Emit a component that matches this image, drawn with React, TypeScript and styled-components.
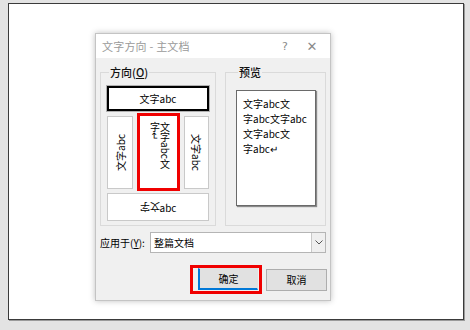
import React from "react";
import styled, { createGlobalStyle } from "styled-components";

const Global = createGlobalStyle`
  html, body { margin: 0; padding: 0; }
  body {
    background: #e3e3e3;
    font-family: "Noto Sans CJK SC", "Noto Sans", sans-serif;
    width: 470px;
    height: 330px;
    overflow: hidden;
  }
`;

const Page = styled.div`
  margin: 3px 0 0 8px;
  width: 456px;
  height: 317px;
  background: #fff;
  border: 1px solid #3a3a3a;
  box-shadow: 1px 1px 0 #9a9a9a;
  display: flex;
  align-items: flex-start;
  padding: 29px 0 0 86px;
  box-sizing: border-box;
`;

const Dialog = styled.div`
  width: 236px;
  height: 268px;
  border: 1px solid #c4c4c4;
  box-shadow: 0 0 6px rgba(0, 0, 0, 0.25);
  background: #f0f0f0;
  display: flex;
  flex-direction: column;
  box-sizing: border-box;
  font-size: 11px;
  color: #000;
`;

const TitleBar = styled.div`
  height: 24px;
  background: #fff;
  display: flex;
  align-items: center;
  padding: 0 0 0 6px;
  color: #9a9a9a;
  font-size: 11px;
`;

const Title = styled.span`
  flex: 1;
  letter-spacing: 0.2px;
`;

const TitleBtn = styled.span<{ $w: number }>`
  width: ${(p) => p.$w}px;
  text-align: center;
  color: #8a8a8a;
  font-family: "DejaVu Sans", sans-serif;
  font-size: ${(p) => (p.$w > 30 ? 13 : 11)}px;
`;

const Body = styled.div`
  flex: 1;
  display: flex;
  flex-direction: column;
  padding: 8px 3px 0 4px;
`;

const Groups = styled.div`
  display: flex;
  gap: 9px;
  align-items: stretch;
`;

const Group = styled.fieldset<{ $w: number; $pad: string }>`
  margin: 0;
  width: ${(p) => p.$w}px;
  box-sizing: border-box;
  border: 1px solid #dadada;
  padding: ${(p) => p.$pad};
  min-width: 0;
`;

const Legend = styled.legend`
  padding: 0 1px;
  margin-left: 2px;
  font-size: 11px;
  line-height: 12px;
  font-weight: 500;
  color: #111;
  u { text-decoration: underline; }
`;

const Options = styled.div`
  display: grid;
  grid-template-columns: 26px 43px 25px;
  grid-template-rows: 24px 78px 28px;
  column-gap: 4px;
  row-gap: 2px;
  width: 102px;
`;

const Option = styled.div<{ $span?: boolean; $inset?: boolean }>`
  grid-column: ${(p) => (p.$span ? "1 / 4" : "auto")};
  background: #fff;
  border: 1px solid #c9c9c9;
  box-sizing: border-box;
  display: flex;
  align-items: center;
  justify-content: center;
  font-size: 10px;
  line-height: 11px;
  margin: ${(p) => (p.$inset ? "3px 0 2px" : "0")};
  overflow: hidden;
`;

const TopOption = styled(Option)`
  border: 2px solid #000;
  box-shadow: 0 0 0 1px #b0b0b0;
  margin-top: -1px;
  margin-bottom: 3px;
  height: 25px;
  align-items: center;
`;

const RedOption = styled(Option)`
  border: 3px solid #f00000;
  align-items: flex-start;
  padding-top: 6px;
`;

const Vertical = styled.span<{ $flip?: boolean }>`
  writing-mode: vertical-rl;
  text-orientation: sideways;
  transform: ${(p) => (p.$flip ? "rotate(180deg)" : "none")};
  white-space: nowrap;
`;

const VerticalCols = styled.span`
  writing-mode: vertical-rl;
  white-space: pre;
  line-height: 10px;
  margin-right: -2px;
`;

const Flip = styled.span`
  display: inline-block;
  transform: rotate(180deg);
`;

const Preview = styled.div`
  width: 80px;
  height: 116px;
  background: #fff;
  border: 1px solid #6a6a6a;
  box-shadow: 1px 1px 1px #8a8a8a;
  box-sizing: border-box;
  padding: 5px 0 0 6px;
  font-size: 10px;
  line-height: 15px;
  white-space: pre;
`;

const ApplyRow = styled.div`
  margin-top: 6px;
  display: flex;
  align-items: center;
`;

const ApplyLabel = styled.span`
  width: 50px;
  font-size: 10px;
  u { text-decoration: underline; }
`;

const Select = styled.div`
  width: 176px;
  height: 21px;
  background: #fff;
  border: 1px solid #b5b5b5;
  box-sizing: border-box;
  display: flex;
  align-items: stretch;
`;

const SelectText = styled.span`
  flex: 1;
  padding-left: 3px;
  display: flex;
  align-items: center;
  font-size: 10px;
`;

const SelectArrow = styled.span`
  width: 13px;
  border-left: 1px solid #c8c8c8;
  background: #efefef;
  display: flex;
  align-items: center;
  justify-content: center;
`;

const ButtonRow = styled.div`
  margin-top: 12px;
  display: flex;
  justify-content: flex-end;
  align-items: center;
  gap: 4px;
  padding-right: 0;
`;

const Highlight = styled.div`
  border: 3px solid #f00000;
  padding: 0 1px 1px 5px;
  display: flex;
`;

const Button = styled.button<{ $w: number; $focus?: boolean }>`
  width: ${(p) => p.$w}px;
  height: 22px;
  margin: 0;
  padding: 0;
  font-family: inherit;
  font-size: 10px;
  color: #000;
  background: #e1e1e1;
  border: 1px solid ${(p) => (p.$focus ? "#e1e1e1" : "#adadad")};
  ${(p) =>
    p.$focus
      ? "border-left: 2px solid #0078d7; border-bottom: 2px solid #0078d7;"
      : ""}
  box-sizing: border-box;
`;

export default function App() {
  return (
    <>
      <Global />
      <Page>
        <Dialog>
          <TitleBar>
            <Title>文字方向 - 主文档</Title>
            <TitleBtn $w={18}>?</TitleBtn>
            <TitleBtn $w={36}>✕</TitleBtn>
          </TitleBar>
          <Body>
            <Groups>
              <Group $w={116} $pad="9px 6px 4px 6px">
                <Legend>
                  方向(<u>O</u>)
                </Legend>
                <Options>
                  <TopOption $span>文字abc</TopOption>
                  <Option $inset>
                    <Vertical $flip>文字abc</Vertical>
                  </Option>
                  <RedOption>
                    <VerticalCols>{"文字abc文\n字↵"}</VerticalCols>
                  </RedOption>
                  <Option $inset>
                    <Vertical>文字abc</Vertical>
                  </Option>
                  <Option $span>
                    <Flip>文字</Flip>abc
                  </Option>
                </Options>
              </Group>
              <Group $w={101} $pad="12px 0 0 10px">
                <Legend>预览</Legend>
                <Preview>{"文字abc文\n字abc文字abc\n文字abc文\n字abc↵"}</Preview>
              </Group>
            </Groups>
            <ApplyRow>
              <ApplyLabel>
                应用于(<u>Y</u>):
              </ApplyLabel>
              <Select>
                <SelectText>整篇文档</SelectText>
                <SelectArrow>
                  <svg width="8" height="5" viewBox="0 0 8 5">
                    <path d="M0.5 0.5 L4 4 L7.5 0.5" fill="none" stroke="#555" strokeWidth="1" />
                  </svg>
                </SelectArrow>
              </Select>
            </ApplyRow>
            <ButtonRow>
              <Highlight>
                <Button $w={60} $focus>
                  确定
                </Button>
              </Highlight>
              <Button $w={61}>取消</Button>
            </ButtonRow>
          </Body>
        </Dialog>
      </Page>
    </>
  );
}
